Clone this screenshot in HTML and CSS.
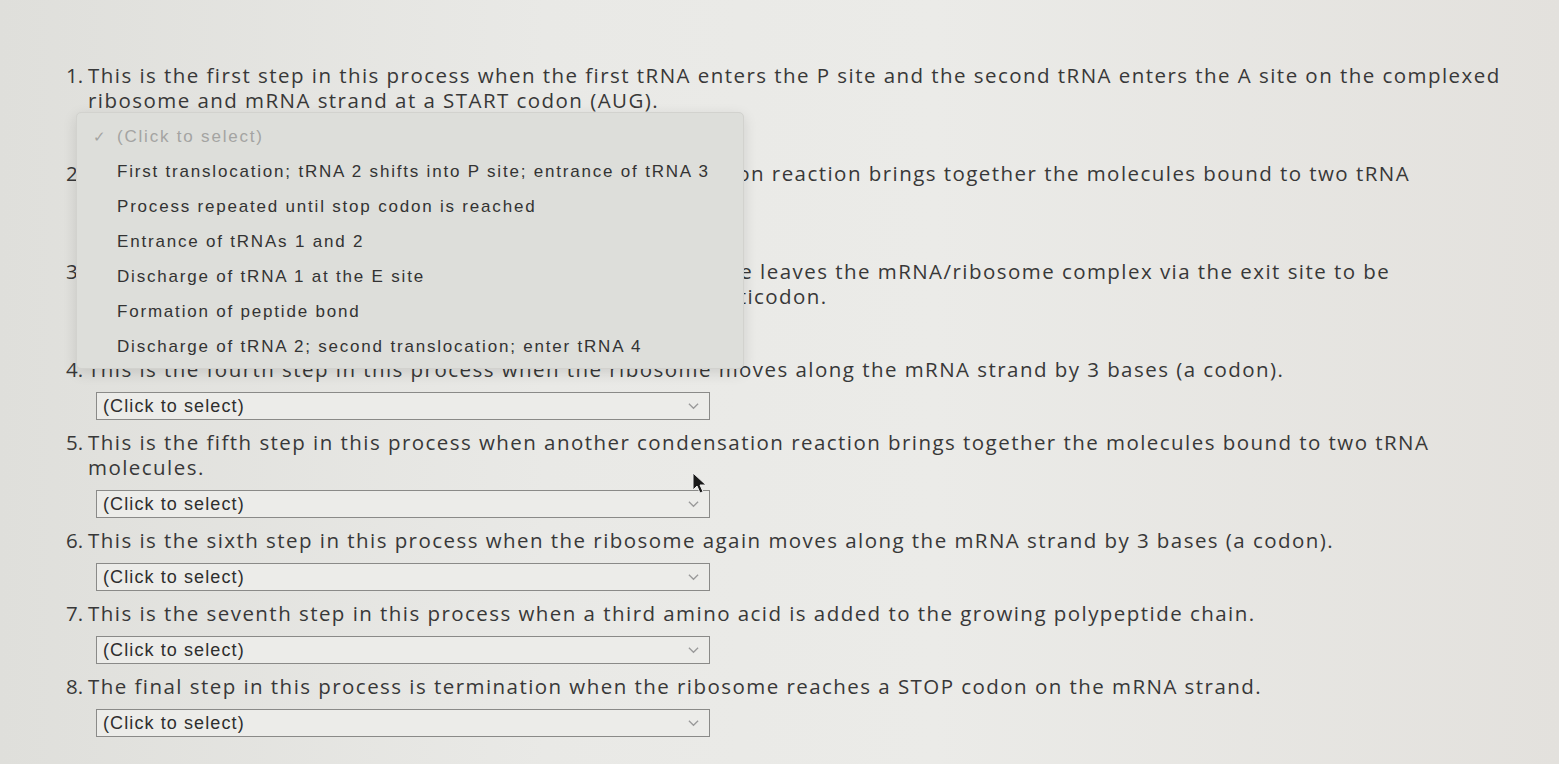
FILE: index.html
```html
<!DOCTYPE html>
<html lang="en">
<head>
  <meta charset="UTF-8" />
  <meta name="viewport" content="width=device-width, initial-scale=1.0" />
  <title>Translation Steps</title>
  <link rel="stylesheet" href="styles.css">
</head>
<body>
  <main class="quiz">
    <ol class="steps">
      <li class="step">
        <span class="num">1.</span>
        <div class="step-body">
          <p class="prompt">This is the first step in this process when the first tRNA enters the P site and the second tRNA enters the A site on the complexed ribosome and mRNA strand at a START codon (AUG).</p>
          <div class="picker"><span>(Click to select)</span><svg class="chev" viewBox="0 0 12 8"><path d="M1 1.5 6 6.5 11 1.5" /></svg></div>
        </div>
      </li>
      <li class="step">
        <span class="num">2.</span>
        <div class="step-body">
          <p class="prompt">This is the second step in this process when the condensation reaction brings together the molecules bound to two tRNA molecules.</p>
          <div class="picker"><span>(Click to select)</span><svg class="chev" viewBox="0 0 12 8"><path d="M1 1.5 6 6.5 11 1.5" /></svg></div>
        </div>
      </li>
      <li class="step">
        <span class="num">3.</span>
        <div class="step-body">
          <p class="prompt">This is the third step in this process when the tRNA molecule leaves the mRNA/ribosome complex via the exit site to be recharged with a new amino acid that corresponds to its anticodon.</p>
          <div class="picker"><span>(Click to select)</span><svg class="chev" viewBox="0 0 12 8"><path d="M1 1.5 6 6.5 11 1.5" /></svg></div>
        </div>
      </li>
      <li class="step">
        <span class="num">4.</span>
        <div class="step-body">
          <p class="prompt">This is the fourth step in this process when the ribosome moves along the mRNA strand by 3 bases (a codon).</p>
          <div class="picker"><span>(Click to select)</span><svg class="chev" viewBox="0 0 12 8"><path d="M1 1.5 6 6.5 11 1.5" /></svg></div>
        </div>
      </li>
      <li class="step">
        <span class="num">5.</span>
        <div class="step-body">
          <p class="prompt">This is the fifth step in this process when another condensation reaction brings together the molecules bound to two tRNA molecules.</p>
          <div class="picker"><span>(Click to select)</span><svg class="chev" viewBox="0 0 12 8"><path d="M1 1.5 6 6.5 11 1.5" /></svg></div>
        </div>
      </li>
      <li class="step">
        <span class="num">6.</span>
        <div class="step-body">
          <p class="prompt">This is the sixth step in this process when the ribosome again moves along the mRNA strand by 3 bases (a codon).</p>
          <div class="picker"><span>(Click to select)</span><svg class="chev" viewBox="0 0 12 8"><path d="M1 1.5 6 6.5 11 1.5" /></svg></div>
        </div>
      </li>
      <li class="step">
        <span class="num">7.</span>
        <div class="step-body">
          <p class="prompt">This is the seventh step in this process when a third amino acid is added to the growing polypeptide chain.</p>
          <div class="picker"><span>(Click to select)</span><svg class="chev" viewBox="0 0 12 8"><path d="M1 1.5 6 6.5 11 1.5" /></svg></div>
        </div>
      </li>
      <li class="step">
        <span class="num">8.</span>
        <div class="step-body">
          <p class="prompt">The final step in this process is termination when the ribosome reaches a STOP codon on the mRNA strand.</p>
          <div class="picker"><span>(Click to select)</span><svg class="chev" viewBox="0 0 12 8"><path d="M1 1.5 6 6.5 11 1.5" /></svg></div>
        </div>
      </li>
    </ol>

    <!-- open dropdown for step 1 -->
    <ul class="menu">
      <li class="opt opt-current"><span class="tick">✓</span>(Click to select)</li>
      <li class="opt">First translocation; tRNA 2 shifts into P site; entrance of tRNA 3</li>
      <li class="opt">Process repeated until stop codon is reached</li>
      <li class="opt">Entrance of tRNAs 1 and 2</li>
      <li class="opt">Discharge of tRNA 1 at the E site</li>
      <li class="opt">Formation of peptide bond</li>
      <li class="opt">Discharge of tRNA 2; second translocation; enter tRNA 4</li>
    </ul>

    <svg class="cursor" viewBox="0 0 14 22"><path d="M1 1v17l4-4 3 7 3-1.3-3-6.7h6z" /></svg>
  </main>
</body>
</html>
```

FILE: styles.css
```css
body {
  margin: 0;
  min-height: 100vh;
  background: linear-gradient(90deg, #dfdfdb 0%, #e9e9e6 35%, #ebebe8 60%, #e3e1dd 100%);
  color: #383838;
  font-family: 'Open Sans', sans-serif;
}

.quiz {
  position: relative;
  padding: 63px 0 0 66px;
}

.steps {
  list-style: none;
  margin: 0;
  padding: 0;
}

.step {
  display: flex;
}

.num {
  width: 22px;
  flex-shrink: 0;
  font-size: 20.5px;
  line-height: 25px;
}

.step-body {
  flex: 1;
}

.prompt {
  margin: 0;
  max-width: 1416px;
  font-size: 20.5px;
  line-height: 25px;
  letter-spacing: 1.45px;
}

.picker {
  display: flex;
  align-items: center;
  justify-content: space-between;
  box-sizing: border-box;
  width: 614px;
  height: 28px;
  margin: 10px 0 10px 8px;
  padding: 0 10px 0 6px;
  border: 1.5px solid #8a8a88;
  background: #ecece9;
  font-family: 'Liberation Sans', Arial, sans-serif;
  font-size: 18px;
  letter-spacing: 1.1px;
  color: #2e2e2e;
}

.chev {
  width: 11px;
  height: 8px;
  fill: none;
  stroke: #9a9a9a;
  stroke-width: 1.4;
}

.menu {
  position: absolute;
  left: 76px;
  top: 112px;
  width: 668px;
  height: 257px;
  box-sizing: border-box;
  margin: 0;
  padding: 6px 0 3px;
  list-style: none;
  background: #dddeda;
  border: 1px solid #d2d2ce;
  border-radius: 5px;
  box-shadow: 0 4px 14px rgba(0, 0, 0, 0.12);
  font-family: 'Liberation Sans', Arial, sans-serif;
  font-size: 17px;
  letter-spacing: 1.8px;
  color: #333;
}

.opt {
  height: 35px;
  line-height: 35px;
  padding-left: 40px;
  white-space: nowrap;
}

.opt-current {
  position: relative;
  color: #a4a4a2;
}

.tick {
  position: absolute;
  left: 16px;
  font-size: 15px;
}

.cursor {
  position: absolute;
  left: 692px;
  top: 472px;
  width: 14px;
  height: 22px;
  fill: #1a1a1a;
  stroke: #eee;
  stroke-width: 1;
}
```
